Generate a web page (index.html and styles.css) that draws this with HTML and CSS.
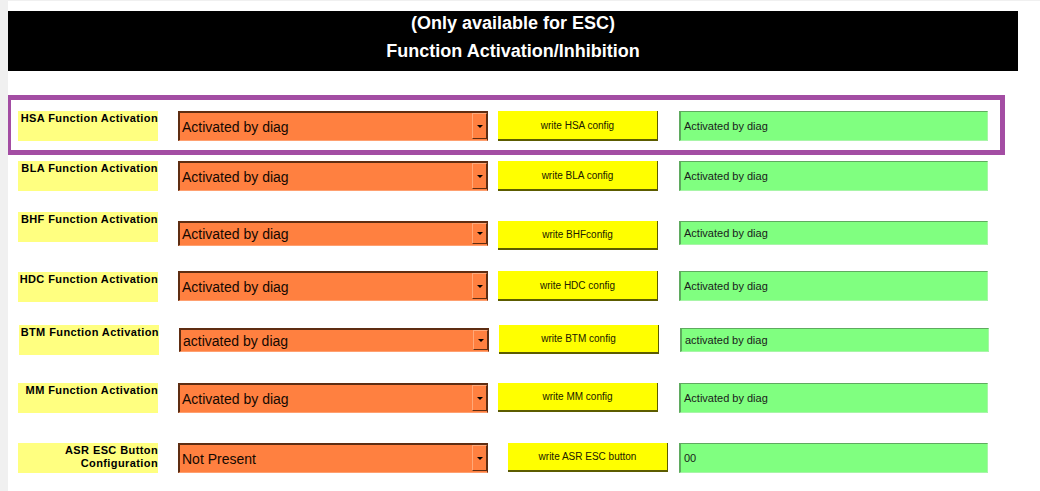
FILE: index.html
```html
<!DOCTYPE html>
<html lang="en">
<head>
    <meta charset="UTF-8">
    <title>Function Activation/Inhibition</title>
    <link rel="stylesheet" href="styles.css">
</head>
<body>

<div class="page">
    <div class="banner">
        <div class="banner-top">(Only available for ESC)</div>
        <div class="banner-sub">Function Activation/Inhibition</div>
    </div>

    <div class="highlight">
        <div class="row">
            <div class="label">HSA Function Activation</div>
            <div class="combo"><span class="combo-text">Activated by diag</span><span class="combo-arrow"><i></i></span></div>
            <button class="write">write HSA config</button>
            <div class="result">Activated by diag</div>
        </div>
    </div>

    <div class="row row-bla">
        <div class="label">BLA Function Activation</div>
        <div class="combo"><span class="combo-text">Activated by diag</span><span class="combo-arrow"><i></i></span></div>
        <button class="write">write BLA config</button>
        <div class="result">Activated by diag</div>
    </div>

    <div class="row row-bhf">
        <div class="label">BHF Function Activation</div>
        <div class="combo"><span class="combo-text">Activated by diag</span><span class="combo-arrow"><i></i></span></div>
        <button class="write">write BHFconfig</button>
        <div class="result">Activated by diag</div>
    </div>

    <div class="row row-hdc">
        <div class="label">HDC Function Activation</div>
        <div class="combo"><span class="combo-text">Activated by diag</span><span class="combo-arrow"><i></i></span></div>
        <button class="write">write HDC config</button>
        <div class="result">Activated by diag</div>
    </div>

    <div class="row row-btm">
        <div class="label">BTM Function Activation</div>
        <div class="combo"><span class="combo-text">activated by diag</span><span class="combo-arrow"><i></i></span></div>
        <button class="write">write BTM config</button>
        <div class="result">activated by diag</div>
    </div>

    <div class="row row-mm">
        <div class="label">MM Function Activation</div>
        <div class="combo"><span class="combo-text">Activated by diag</span><span class="combo-arrow"><i></i></span></div>
        <button class="write">write MM config</button>
        <div class="result">Activated by diag</div>
    </div>

    <div class="row row-asr">
        <div class="label">ASR ESC Button<br>Configuration</div>
        <div class="combo"><span class="combo-text">Not Present</span><span class="combo-arrow"><i></i></span></div>
        <button class="write">write ASR ESC button</button>
        <div class="result">00</div>
    </div>
</div>

</body>
</html>
```

FILE: styles.css
```css
* {
    margin: 0;
    padding: 0;
    box-sizing: border-box;
}

html, body {
    width: 100%;
    height: 100%;
    background: #fff;
    font-family: "Liberation Sans", Arial, sans-serif;
}

.page {
    height: 100%;
    border-left: 8px solid #f0f0f0;
    border-top: 1px solid #f0f0f0;
    overflow: hidden;
}

/* black title bar */
.banner {
    margin-top: 10px;
    width: 1010px;
    height: 60px;
    background: #000;
    color: #fff;
    text-align: center;
    font-weight: bold;
    font-size: 18px;
}
.banner-top {
    line-height: 24px;
}
.banner-sub {
    line-height: 33px;
}

/* purple frame round the first line */
.highlight {
    margin: 24px 0 0 -2px;
    width: 999px;
    border: 5px solid #a34da3;
    padding: 11px 0 9px 7px;
}
.highlight .row {
    margin: 0;
}

.row {
    display: flex;
    align-items: flex-start;
    margin-left: 10px;
}

.label {
    width: 140px;
    height: 30px;
    padding-top: 1px;
    background: #ffff80;
    color: #000;
    font-size: 11px;
    font-weight: bold;
    letter-spacing: .4px;
    line-height: 13px;
    text-align: right;
    white-space: nowrap;
}

.combo {
    display: flex;
    width: 310px;
    height: 30px;
    margin-left: 20px;
    background: #ff8040;
    border-style: solid;
    border-width: 2px 1px 1px 2px;
    border-color: #5e2d12 #5e2d12 #ffa070 #5e2d12;
}
.combo-text {
    flex: 1;
    display: flex;
    align-items: center;
    padding-left: 2px;
    font-size: 14px;
    color: #140800;
}
.combo-arrow {
    display: flex;
    align-items: center;
    justify-content: center;
    width: 15px;
    margin: 0 0 1px 0;
    border: 1px solid;
    border-color: #ffa878 #5e2d12 #5e2d12 #ffa878;
}
.combo-arrow i {
    width: 0;
    height: 0;
    border-left: 3px solid transparent;
    border-right: 3px solid transparent;
    border-top: 3px solid #000;
}

.write {
    width: 160px;
    height: 30px;
    margin-left: 10px;
    background: #ffff00;
    border: none;
    border-right: 1px solid #5c5c00;
    border-bottom: 2px solid #5c5c00;
    font-family: "Liberation Sans", Arial, sans-serif;
    font-size: 10px;
    color: #202000;
}

.result {
    display: flex;
    align-items: center;
    width: 309px;
    height: 30px;
    margin-left: 21px;
    padding-left: 3px;
    background: #80ff80;
    border-top: 1px solid #5faa5f;
    border-left: 2px solid #5faa5f;
    border-right: 1px solid #a8f5a8;
    border-bottom: 1px solid #a8f5a8;
    font-size: 11px;
    color: #1a1a1a;
}

/* each line sits a little differently, as on the sheet */
.row-bla {
    margin-top: 6px;
}

.row-bhf {
    margin-top: 21px;
}
.row-bhf .combo {
    margin-top: 9px;
    height: 25px;
}
.row-bhf .write {
    margin-top: 9px;
    height: 29px;
}
.row-bhf .result {
    margin-top: 9px;
    height: 24px;
}

.row-hdc {
    margin-top: 21px;
}
.row-hdc .label {
    margin-top: 1px;
}

.row-btm {
    margin-top: 23px;
    margin-left: 11px;
}
.row-btm .combo {
    margin-top: 3px;
    height: 24px;
}
.row-btm .write {
    height: 29px;
}
.row-btm .result {
    margin-top: 3px;
    height: 24px;
}

.row-mm {
    margin-top: 28px;
}
.row-mm .write {
    height: 29px;
}

.row-asr {
    margin-top: 30px;
}
.row-asr .write {
    margin-left: 20px;
    height: 29px;
}
.row-asr .result {
    margin-left: 11px;
}
```
